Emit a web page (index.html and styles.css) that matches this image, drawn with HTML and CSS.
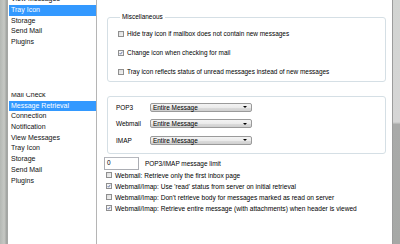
FILE: index.html
```html
<!DOCTYPE html>
<html>
<head>
<meta charset="utf-8">
<link rel="stylesheet" href="styles.css">
</head>
<body>
<div class="screen">
  <div class="desk desk-left"></div>
  <div class="window">
    <section class="page page-top">
      <ul class="nav nav-top">
        <li>View Messages</li>
        <li class="sel">Tray Icon</li>
        <li>Storage</li>
        <li>Send Mail</li>
        <li>Plugins</li>
      </ul>
      <div class="panel">
        <fieldset class="group misc">
          <legend>Miscellaneous</legend>
          <label class="opt"><span class="cb"></span>Hide tray icon if mailbox does not contain new messages</label>
          <label class="opt"><span class="cb on"><svg viewBox="0 0 6 6"><path d="M1 3.2 L2.4 4.8 L5 1.2" fill="none" stroke="#3a4f8f" stroke-width="1.1"/></svg></span>Change icon when checking for mail</label>
          <label class="opt"><span class="cb"></span>Tray icon reflects status of unread messages instead of new messages</label>
        </fieldset>
      </div>
    </section>
    <section class="page page-bottom">
      <ul class="nav nav-bottom">
        <li>Mail Check</li>
        <li class="sel">Message Retrieval</li>
        <li>Connection</li>
        <li>Notification</li>
        <li>View Messages</li>
        <li>Tray Icon</li>
        <li>Storage</li>
        <li>Send Mail</li>
        <li>Plugins</li>
      </ul>
      <div class="panel">
        <fieldset class="group modes">
          <div class="mode"><span class="mode-label">POP3</span><span class="combo">Entire Message<span class="arrow"></span></span></div>
          <div class="mode"><span class="mode-label">Webmail</span><span class="combo">Entire Message<span class="arrow"></span></span></div>
          <div class="mode"><span class="mode-label">IMAP</span><span class="combo">Entire Message<span class="arrow"></span></span></div>
        </fieldset>
        <div class="limit"><span class="textbox">0</span><span>POP3/IMAP message limit</span></div>
        <div class="opts">
          <label class="opt2"><span class="cb"></span>Webmail: Retrieve only the first inbox page</label>
          <label class="opt2"><span class="cb on"><svg viewBox="0 0 6 6"><path d="M1 3.2 L2.4 4.8 L5 1.2" fill="none" stroke="#3a4f8f" stroke-width="1.1"/></svg></span>Webmail/Imap: Use 'read' status from server on initial retrieval</label>
          <label class="opt2"><span class="cb"></span>Webmail/Imap: Don't retrieve body for messages marked as read on server</label>
          <label class="opt2"><span class="cb on"><svg viewBox="0 0 6 6"><path d="M1 3.2 L2.4 4.8 L5 1.2" fill="none" stroke="#3a4f8f" stroke-width="1.1"/></svg></span>Webmail/Imap: Retrieve entire message (with attachments) when header is viewed</label>
        </div>
      </div>
    </section>
  </div>
  <div class="desk desk-right"></div>
</div>
</body>
</html>
```

FILE: styles.css
```css
* { box-sizing: border-box; }
html, body { margin: 0; padding: 0; }
body {
  width: 400px;
  height: 244px;
  overflow: hidden;
  background: #fff;
  font-family: "Liberation Sans", Arial, sans-serif;
  color: #000;
}
.screen {
  display: flex;
  width: 400px;
  height: 244px;
}
.desk-left {
  width: 7px;
  background: linear-gradient(90deg, #b4b8b4 0%, #c6c8c4 60%, #9da09d 100%);
}
.desk-right {
  width: 8px;
  border-left: 1px solid #9c9c9c;
  background: linear-gradient(180deg, #d2d4d2 0%, #d6d6d6 50%, #a9aaa9 51%, #a6a8a6 100%);
}
.window {
  flex: 1;
  display: flex;
  flex-direction: column;
  background: #fff;
}
.page {
  display: flex;
  overflow: hidden;
}
.page-top { height: 93px; }
.page-bottom { flex: 1; }

.nav {
  list-style: none;
  margin: 0;
  padding: 0 0 0 1px;
  width: 90px;
  flex: none;
  border-left: 1px solid #a5a7a5;
  border-right: 1px solid #b5b5b5;
  font-size: 7px;
  color: #111;
}
.nav-top { margin-top: -5.7px; }
.nav-bottom { margin-top: -3px; }
.nav li {
  height: 10.7px;
  line-height: 10.7px;
  padding-left: 2px;
  white-space: nowrap;
}
.nav li.sel {
  background: #3399ff;
  color: #fff;
}

.panel {
  flex: 1;
  padding: 0 6px 0 10px;
  font-size: 6.45px;
}
.page-top .panel { padding-top: 13px; }
.page-bottom .panel { padding-top: 3px; }

.group {
  margin: 0;
  border: 1px solid #d5dfe5;
  border-radius: 3px;
  min-width: 0;
}
.misc {
  padding: 3px 0 0 10px;
}
.misc legend {
  padding: 0 2px;
  margin-left: 2px;
  line-height: 8px;
  height: 8px;
}
.opt {
  display: flex;
  align-items: center;
  height: 19px;
  white-space: nowrap;
}
.cb {
  width: 6px;
  height: 6px;
  flex: none;
  margin-right: 3px;
  border: 1px solid #8f8f8f;
  background: linear-gradient(135deg, #dcdcdc 0%, #f4f4f4 100%);
  display: flex;
}
.cb.on { background: #f4f4f4; }
.cb svg { width: 100%; height: 100%; overflow: visible; }

.modes {
  padding: 2px 0 4px 8px;
}
.mode {
  display: flex;
  align-items: center;
  height: 16.5px;
}
.mode-label {
  width: 34px;
  flex: none;
}
.combo {
  position: relative;
  width: 102px;
  height: 9px;
  line-height: 7px;
  padding-left: 2px;
  border: 1px solid #9a9a9a;
  border-radius: 2px;
  background: linear-gradient(180deg, #f3f3f3 0%, #ebebeb 50%, #dddddd 51%, #cfcfcf 100%);
}
.arrow {
  position: absolute;
  right: 4px;
  top: 2.5px;
  width: 0;
  height: 0;
  border-left: 2px solid transparent;
  border-right: 2px solid transparent;
  border-top: 2.5px solid #000;
}

.limit {
  display: flex;
  align-items: center;
  margin-top: 3px;
  margin-left: -3px;
  height: 13px;
}
.textbox {
  width: 35px;
  height: 13px;
  line-height: 9px;
  padding-left: 2px;
  margin-right: 6px;
  border: 1px solid #abadb3;
  border-top-color: #b6b8be;
}
.opts {
  margin-left: -1px;
  font-size: 6.6px;
}
.opt2 {
  display: flex;
  align-items: center;
  height: 11px;
  white-space: nowrap;
}
```
